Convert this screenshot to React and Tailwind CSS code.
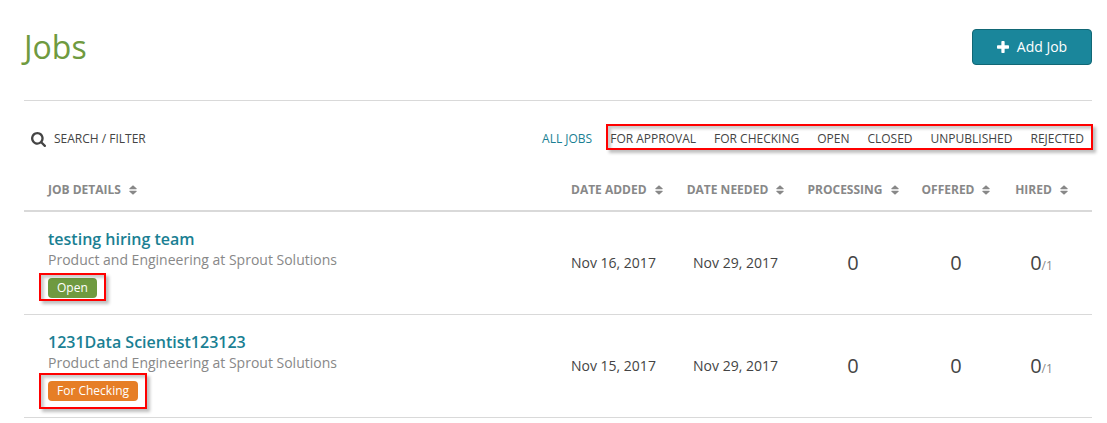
const filters = ['For Approval', 'For Checking', 'Open', 'Closed', 'Unpublished', 'Rejected'];

const columns = [
  { label: 'Job Details', className: 'pl-6 text-left' },
  { label: 'Date Added', className: 'w-[99px] text-left' },
  { label: 'Date Needed', className: 'w-[131px] text-center' },
  { label: 'Processing', className: 'w-[104px] text-center' },
  { label: 'Offered', className: 'w-[102px] text-center' },
  { label: 'Hired', className: 'w-[85px] pr-4 text-center' },
];

const jobs = [
  {
    id: 1,
    title: 'testing hiring team',
    team: 'Product and Engineering at Sprout Solutions',
    status: 'Open',
    badge: 'bg-[#6f9a40]',
    highlight: '-inset-x-[9px] -top-[5px] -bottom-[3px]',
    added: 'Nov 16, 2017',
    needed: 'Nov 29, 2017',
  },
  {
    id: 2,
    title: '1231Data Scientist123123',
    team: 'Product and Engineering at Sprout Solutions',
    status: 'For Checking',
    badge: 'bg-[#e67e26]',
    highlight: '-inset-x-[9px] -inset-y-2',
    added: 'Nov 15, 2017',
    needed: 'Nov 29, 2017',
  },
];

function SearchIcon() {
  return (
    <svg viewBox="0 128 1664 1664" className="size-[15px]" fill="currentColor" aria-hidden="true">
      <path d="M1152 832q0-185-131.5-316.5t-316.5-131.5-316.5 131.5-131.5 316.5 131.5 316.5 316.5 131.5 316.5-131.5 131.5-316.5zm512 832q0 52-38 90t-90 38q-54 0-90-38l-343-342q-179 124-399 124-143 0-273.5-55.5t-225-150-150-225-55.5-273.5 55.5-273.5 150-225 225-150 273.5-55.5 273.5 55.5 225 150 150 225 55.5 273.5q0 220-124 399l343 343q37 37 37 90z" />
    </svg>
  );
}

function PlusIcon() {
  return (
    <svg viewBox="0 0 1408 1408" className="size-3" fill="currentColor" aria-hidden="true">
      <path d="M1408 608v192q0 40-28 68t-68 28h-416v416q0 40-28 68t-68 28h-192q-40 0-68-28t-28-68v-416h-416q-40 0-68-28t-28-68v-192q0-40 28-68t68-28h416v-416q0-40 28-68t68-28h192q40 0 68 28t28 68v416h416q40 0 68 28t28 68z" />
    </svg>
  );
}

function SortIcon() {
  return (
    <svg viewBox="0 0 8 10" className="h-[10px] w-2" fill="currentColor" aria-hidden="true">
      <path d="M4 0.2 7.7 3.4Q7.9 4.2 7.2 4.2H0.8Q0.1 4.2 0.3 3.4Z" />
      <path d="M4 9.8 7.7 6.6Q7.9 5.8 7.2 5.8H0.8Q0.1 5.8 0.3 6.6Z" />
    </svg>
  );
}

function Highlight({ className }) {
  return (
    <span
      className={`pointer-events-none absolute border-2 border-[#ff0000] shadow-[3px_3px_3px_rgba(0,0,0,0.25),inset_3px_3px_3px_rgba(0,0,0,0.2)] ${className}`}
    />
  );
}

export default function App() {
  return (
    <main className="bg-white pr-[15px] pb-1 pl-6 font-['Open_Sans',sans-serif] text-[#444]">
      <header className="flex items-center justify-between border-b border-[#d9d9d9] pt-[29px] pb-[35px]">
        <h1 className="text-[32px] leading-9 text-[#6f9a40]">Jobs</h1>
        <button
          type="button"
          className="flex h-9 w-[120px] items-center justify-center gap-2 rounded border border-[#116775] bg-[#1a869b] text-sm text-white"
        >
          <PlusIcon />
          Add Job
        </button>
      </header>

      <div className="flex items-center justify-between pt-[25px] pr-2 pl-[7px] text-xs leading-[26px] uppercase">
        <button type="button" className="flex items-center gap-2 uppercase">
          <SearchIcon />
          Search / Filter
        </button>
        <nav className="flex gap-[18px]">
          <a href="#all" className="text-[#1a7f93]">All Jobs</a>
          <div className="relative flex gap-[18px]">
            {filters.map((f) => (
              <a key={f} href={`#${f.toLowerCase().replace(' ', '-')}`}>{f}</a>
            ))}
            <Highlight className="-top-0.5 -right-[9px] bottom-0.5 -left-1" />
          </div>
        </nav>
      </div>

      <table className="mt-[15px] w-full table-fixed border-collapse">
        <thead>
          <tr className="h-11 border-b-2 border-[#d9d9d9]">
            {columns.map((c) => (
              <th key={c.label} className={`pt-[3px] text-xs font-bold whitespace-nowrap text-[#888] ${c.className}`}>
                <button type="button" className="inline-flex items-center gap-2 uppercase">
                  {c.label}
                  <SortIcon />
                </button>
              </th>
            ))}
          </tr>
        </thead>
        <tbody>
          {jobs.map((job) => (
            <tr key={job.id} className="border-b border-[#d9d9d9] text-center text-sm">
              <td className="py-4 pl-6 text-left">
                <a href={`#job-${job.id}`} className="block text-base leading-[22px] font-semibold text-[#1a7f93]">
                  {job.title}
                </a>
                <p className="leading-5 text-[#888]">{job.team}</p>
                <div className="relative mt-2 w-fit">
                  <span className={`block rounded px-[9px] text-xs leading-5 text-white ${job.badge}`}>
                    {job.status}
                  </span>
                  <Highlight className={job.highlight} />
                </div>
              </td>
              <td className="text-left">{job.added}</td>
              <td>{job.needed}</td>
              <td className="text-xl">0</td>
              <td className="text-xl">0</td>
              <td className="pr-4 text-xl">
                0<span className="text-xs text-[#888]">/1</span>
              </td>
            </tr>
          ))}
        </tbody>
      </table>
    </main>
  );
}
